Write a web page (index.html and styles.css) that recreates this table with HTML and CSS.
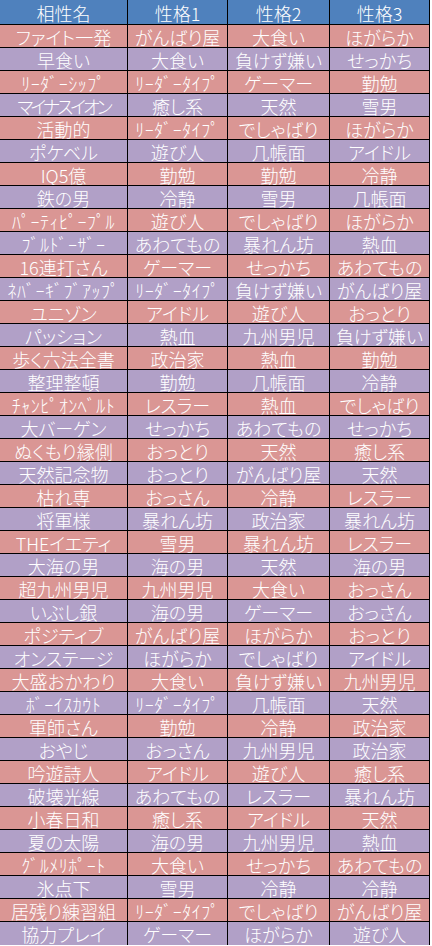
FILE: index.html
```html
<!DOCTYPE html>
<html lang="ja">
<head>
<meta charset="utf-8">
<title>相性表</title>
<link rel="stylesheet" href="styles.css">
</head>
<body>
<div class="sheet">
  <div class="row head"><div class="cell">相性名</div><div class="cell">性格1</div><div class="cell">性格2</div><div class="cell">性格3</div></div>
  <div class="row pink"><div class="cell">ファイト一発</div><div class="cell">がんばり屋</div><div class="cell">大食い</div><div class="cell">ほがらか</div></div>
  <div class="row purple"><div class="cell">早食い</div><div class="cell">大食い</div><div class="cell">負けず嫌い</div><div class="cell">せっかち</div></div>
  <div class="row pink"><div class="cell hw">ﾘｰﾀﾞｰｼｯﾌﾟ</div><div class="cell hw">ﾘｰﾀﾞｰﾀｲﾌﾟ</div><div class="cell">ゲーマー</div><div class="cell">勤勉</div></div>
  <div class="row purple"><div class="cell tight">マイナスイオン</div><div class="cell">癒し系</div><div class="cell">天然</div><div class="cell">雪男</div></div>
  <div class="row pink"><div class="cell">活動的</div><div class="cell hw">ﾘｰﾀﾞｰﾀｲﾌﾟ</div><div class="cell">でしゃばり</div><div class="cell">ほがらか</div></div>
  <div class="row purple"><div class="cell">ポケベル</div><div class="cell">遊び人</div><div class="cell">几帳面</div><div class="cell">アイドル</div></div>
  <div class="row pink"><div class="cell">IQ5億</div><div class="cell">勤勉</div><div class="cell">勤勉</div><div class="cell">冷静</div></div>
  <div class="row purple"><div class="cell">鉄の男</div><div class="cell">冷静</div><div class="cell">雪男</div><div class="cell">几帳面</div></div>
  <div class="row pink"><div class="cell hw">ﾊﾟｰﾃｨﾋﾟｰﾌﾟﾙ</div><div class="cell">遊び人</div><div class="cell">でしゃばり</div><div class="cell">ほがらか</div></div>
  <div class="row purple"><div class="cell hw">ﾌﾞﾙﾄﾞｰｻﾞｰ</div><div class="cell">あわてもの</div><div class="cell">暴れん坊</div><div class="cell">熱血</div></div>
  <div class="row pink"><div class="cell">16連打さん</div><div class="cell">ゲーマー</div><div class="cell">せっかち</div><div class="cell">あわてもの</div></div>
  <div class="row purple"><div class="cell hw">ﾈﾊﾞｰｷﾞﾌﾞｱｯﾌﾟ</div><div class="cell hw">ﾘｰﾀﾞｰﾀｲﾌﾟ</div><div class="cell">負けず嫌い</div><div class="cell">がんばり屋</div></div>
  <div class="row pink"><div class="cell">ユニゾン</div><div class="cell">アイドル</div><div class="cell">遊び人</div><div class="cell">おっとり</div></div>
  <div class="row purple"><div class="cell">パッション</div><div class="cell">熱血</div><div class="cell">九州男児</div><div class="cell">負けず嫌い</div></div>
  <div class="row pink"><div class="cell">歩く六法全書</div><div class="cell">政治家</div><div class="cell">熱血</div><div class="cell">勤勉</div></div>
  <div class="row purple"><div class="cell">整理整頓</div><div class="cell">勤勉</div><div class="cell">几帳面</div><div class="cell">冷静</div></div>
  <div class="row pink"><div class="cell hw">ﾁｬﾝﾋﾟｵﾝﾍﾞﾙﾄ</div><div class="cell">レスラー</div><div class="cell">熱血</div><div class="cell">でしゃばり</div></div>
  <div class="row purple"><div class="cell">大バーゲン</div><div class="cell">せっかち</div><div class="cell">あわてもの</div><div class="cell">せっかち</div></div>
  <div class="row pink"><div class="cell">ぬくもり縁側</div><div class="cell">おっとり</div><div class="cell">天然</div><div class="cell">癒し系</div></div>
  <div class="row purple"><div class="cell">天然記念物</div><div class="cell">おっとり</div><div class="cell">がんばり屋</div><div class="cell">天然</div></div>
  <div class="row pink"><div class="cell">枯れ専</div><div class="cell">おっさん</div><div class="cell">冷静</div><div class="cell">レスラー</div></div>
  <div class="row purple"><div class="cell">将軍様</div><div class="cell">暴れん坊</div><div class="cell">政治家</div><div class="cell">暴れん坊</div></div>
  <div class="row pink"><div class="cell">THEイエティ</div><div class="cell">雪男</div><div class="cell">暴れん坊</div><div class="cell">レスラー</div></div>
  <div class="row purple"><div class="cell">大海の男</div><div class="cell">海の男</div><div class="cell">天然</div><div class="cell">海の男</div></div>
  <div class="row pink"><div class="cell">超九州男児</div><div class="cell">九州男児</div><div class="cell">大食い</div><div class="cell">おっさん</div></div>
  <div class="row purple"><div class="cell">いぶし銀</div><div class="cell">海の男</div><div class="cell">ゲーマー</div><div class="cell">おっさん</div></div>
  <div class="row pink"><div class="cell">ポジティブ</div><div class="cell">がんばり屋</div><div class="cell">ほがらか</div><div class="cell">おっとり</div></div>
  <div class="row purple"><div class="cell">オンステージ</div><div class="cell">ほがらか</div><div class="cell">でしゃばり</div><div class="cell">アイドル</div></div>
  <div class="row pink"><div class="cell">大盛おかわり</div><div class="cell">大食い</div><div class="cell">負けず嫌い</div><div class="cell">九州男児</div></div>
  <div class="row purple"><div class="cell hw">ﾎﾞｰｲｽｶｳﾄ</div><div class="cell hw">ﾘｰﾀﾞｰﾀｲﾌﾟ</div><div class="cell">几帳面</div><div class="cell">天然</div></div>
  <div class="row pink"><div class="cell">軍師さん</div><div class="cell">勤勉</div><div class="cell">冷静</div><div class="cell">政治家</div></div>
  <div class="row purple"><div class="cell">おやじ</div><div class="cell">おっさん</div><div class="cell">九州男児</div><div class="cell">政治家</div></div>
  <div class="row pink"><div class="cell">吟遊詩人</div><div class="cell">アイドル</div><div class="cell">遊び人</div><div class="cell">癒し系</div></div>
  <div class="row purple"><div class="cell">破壊光線</div><div class="cell">あわてもの</div><div class="cell">レスラー</div><div class="cell">暴れん坊</div></div>
  <div class="row pink"><div class="cell">小春日和</div><div class="cell">癒し系</div><div class="cell">アイドル</div><div class="cell">天然</div></div>
  <div class="row purple"><div class="cell">夏の太陽</div><div class="cell">海の男</div><div class="cell">九州男児</div><div class="cell">熱血</div></div>
  <div class="row pink"><div class="cell hw">ｸﾞﾙﾒﾘﾎﾟｰﾄ</div><div class="cell">大食い</div><div class="cell">せっかち</div><div class="cell">あわてもの</div></div>
  <div class="row purple"><div class="cell">氷点下</div><div class="cell">雪男</div><div class="cell">冷静</div><div class="cell">冷静</div></div>
  <div class="row pink"><div class="cell">居残り練習組</div><div class="cell hw">ﾘｰﾀﾞｰﾀｲﾌﾟ</div><div class="cell">でしゃばり</div><div class="cell">がんばり屋</div></div>
  <div class="row purple last"><div class="cell">協力プレイ</div><div class="cell">ゲーマー</div><div class="cell">ほがらか</div><div class="cell">遊び人</div></div>
</div>
</body>
</html>
```
FILE: styles.css
```css
html, body {
  margin: 0;
  padding: 0;
  background: #ffffff;
}

body {
  overflow: hidden;
  font-family: "Noto Sans CJK JP", "Noto Sans", sans-serif;
}

.sheet {
  width: 429px;
  display: flex;
  flex-direction: column;
  gap: 1px;
  background: #000000;
  border-right: 1px solid #000000;
}

.row {
  display: grid;
  grid-template-columns: 127px 99px 101px 99px;
  column-gap: 1px;
  height: 22px;
}

.row.head {
  height: 24px;
}

.row.last {
  height: 23px;
}

.cell {
  color: #ffffff;
  font-size: 18px;
  font-weight: 300;
  line-height: 20px;
  padding-top: 2px;
  text-align: center;
  white-space: nowrap;
  overflow: hidden;
  font-feature-settings: "palt";
}

.cell.hw {
  font-feature-settings: normal;
  letter-spacing: 0.5px;
}

.cell.tight {
  letter-spacing: -3px;
}

.head .cell {
  background: #4f81bd;
  padding-top: 3px;
  line-height: 21px;
}

.pink .cell {
  background: #da9694;
}

.purple .cell {
  background: #b1a0c7;
}
```
